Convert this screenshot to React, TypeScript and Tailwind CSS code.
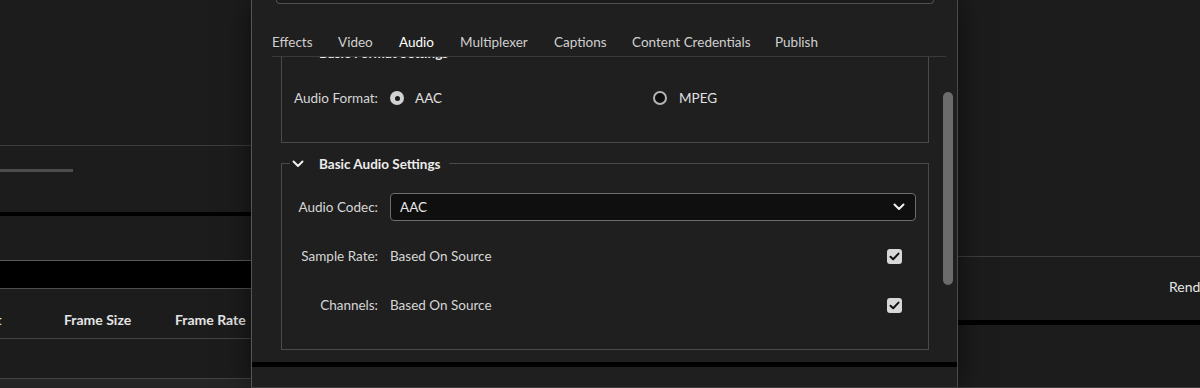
import React from "react";

const font = { fontFamily: "Lato, 'Noto Sans', sans-serif" };

function Chevron({ className = "" }: { className?: string }) {
  return (
    <svg className={className} width="12" height="8" viewBox="0 0 12 8" fill="none">
      <path d="M1.5 1.5 L6 6 L10.5 1.5" stroke="#f0f0f0" strokeWidth="2" strokeLinecap="round" strokeLinejoin="round" />
    </svg>
  );
}

function Check() {
  return (
    <div className="w-[15px] h-[15px] rounded-[3px] bg-[#d8d8d8] flex items-center justify-center">
      <svg width="11" height="9" viewBox="0 0 11 9" fill="none">
        <path d="M1.5 4.8 L4.2 7.3 L9.5 1.6" stroke="#111" strokeWidth="2" strokeLinecap="round" strokeLinejoin="round" />
      </svg>
    </div>
  );
}

function Radio({ checked }: { checked: boolean }) {
  return checked ? (
    <div className="w-[14px] h-[14px] rounded-full bg-[#d2d2d2] flex items-center justify-center">
      <div className="w-[5px] h-[5px] rounded-full bg-[#1a1a1a]" />
    </div>
  ) : (
    <div className="w-[14px] h-[14px] rounded-full border-2 border-[#b4b4b4] bg-[#0e0e0e]" />
  );
}

function Section({ title, children }: { title: string; children: React.ReactNode }) {
  return (
    <fieldset className="border border-[#4a4a4a] pl-[8px] pr-[12px] w-[648px]">
      <legend className="pl-[2px] pr-[8px] h-[20px] leading-[20px] text-[13.5px] font-bold text-[#ececec]">
        <span className="inline-flex items-center h-[20px]">
          <Chevron className="mr-[15px]" />
          {title}
        </span>
      </legend>
      {children}
    </fieldset>
  );
}

function Label({ children }: { children: React.ReactNode }) {
  return (
    <div className="w-[88px] shrink-0 flex justify-end whitespace-nowrap text-[13.5px] text-[#d6d6d6]">{children}</div>
  );
}

const tabs: [string, number][] = [
  ["Effects", 66],
  ["Video", 61],
  ["Audio", 61],
  ["Multiplexer", 94],
  ["Captions", 78],
  ["Content Credentials", 143],
  ["Publish", 60],
];

export default function App() {
  return (
    <div className="w-[1200px] h-[388px] overflow-hidden flex bg-[#1c1c1c] text-[#d6d6d6]" style={font}>
      {/* Left panel */}
      <div className="w-[251px] shrink-0 flex flex-col">
        <div className="h-[146px] border-b border-[#3c3c3c]" />
        <div className="h-[66px] pt-[23px]">
          <div className="w-[73px] h-[3px] bg-[#4c4c4c]" />
        </div>
        <div className="h-[4px] bg-black" />
        <div className="h-[45px] border-b border-[#5a5a5a]" />
        <div className="h-[28px] bg-black border-b border-[#4e4e4e]" />
        <div className="h-[50px] border-b border-[#444] flex items-end pb-[8px] text-[14px] font-bold text-[#e4e4e4] whitespace-nowrap">
          <div className="w-[64px] overflow-hidden flex justify-start">
            <span className="ml-[-43px]">Format</span>
          </div>
          <div className="w-[111px]">Frame Size</div>
          <div>Frame Rate</div>
        </div>
        <div className="h-[40px] border-b border-[#444]" />
        <div className="flex-1 bg-[#252525]" />
      </div>

      {/* Dialog */}
      <div className="relative z-10 w-[707px] shrink-0 h-[388px] flex flex-col bg-[#1f1f1f] border-x border-b border-l-[#555] border-r-[#4a4a4a] border-b-[#3e3e3e] shadow-[0_0_28px_rgba(0,0,0,0.55)]">
        <div className="ml-[24px] w-[658px] h-[4px] border-x border-b border-[#4e4e4e] rounded-b-[5px] bg-[#1b1b1b]" />
        <div className="ml-[20px] mr-[11px] h-[53px] border-b border-[#3a3a3a] flex items-end pb-[4px]">
          {tabs.map(([t, w]) => (
            <div
              key={t}
              className={`h-[20px] leading-[20px] text-[13.5px] whitespace-nowrap ${t === "Audio" ? "text-white" : "text-[#cfcfcf]"}`}
              style={{ width: w }}
            >
              {t}
            </div>
          ))}
        </div>
        <div className="h-[304px] flex overflow-hidden">
          <div className="ml-[29px] mt-[-15px] flex flex-col">
            <Section title="Basic Format Settings">
              <div className="pt-[22px] pb-[30px]">
                <div className="h-[28px] flex items-center">
                  <Label>Audio Format:</Label>
                  <div className="ml-[12px] w-[263px] flex items-center">
                    <Radio checked />
                    <span className="ml-[11px] text-[13.5px] text-[#e0e0e0]">AAC</span>
                  </div>
                  <div className="flex items-center">
                    <Radio checked={false} />
                    <span className="ml-[12px] text-[13.5px] text-[#e0e0e0]">MPEG</span>
                  </div>
                </div>
              </div>
            </Section>
            <div className="h-[10px]" />
            <Section title="Basic Audio Settings">
              <div className="pt-[20px] pb-[30px] flex flex-col gap-[21px]">
                <div className="h-[28px] flex items-center">
                  <Label>Audio Codec:</Label>
                  <div className="ml-[12px] flex-1 h-[28px] rounded-[4px] border border-[#6c6c6c] bg-[#0f0f0f] flex items-center pl-[9px] pr-[10px]">
                    <span className="flex-1 text-[13.5px] text-[#e6e6e6]">AAC</span>
                    <Chevron />
                  </div>
                </div>
                <div className="h-[28px] flex items-center">
                  <Label>Sample Rate:</Label>
                  <span className="ml-[12px] flex-1 text-[13.5px] text-[#d6d6d6]">Based On Source</span>
                  <div className="mr-[14px]">
                    <Check />
                  </div>
                </div>
                <div className="h-[28px] flex items-center">
                  <Label>Channels:</Label>
                  <span className="ml-[12px] flex-1 text-[13.5px] text-[#d6d6d6]">Based On Source</span>
                  <div className="mr-[14px]">
                    <Check />
                  </div>
                </div>
              </div>
            </Section>
          </div>
          <div className="ml-[14px] w-[10px] pt-[35px]">
            <div className="w-[10px] h-[193px] rounded-full bg-[#6b6b6b]" />
          </div>
        </div>
        <div className="mt-[1px] h-[5px] bg-black" />
        <div className="flex-1" />
      </div>

      {/* Right panel */}
      <div className="flex-1 flex flex-col">
        <div className="h-[257px] border-b border-[#3e3e3e]" />
        <div className="h-[63px] flex items-center pb-[4px] pl-[211px] text-[14px] text-[#e6e6e6] whitespace-nowrap overflow-hidden">
          Render Status
        </div>
        <div className="h-[5px] bg-black" />
        <div className="flex-1 border-b border-[#3e3e3e]" />
      </div>
    </div>
  );
}
